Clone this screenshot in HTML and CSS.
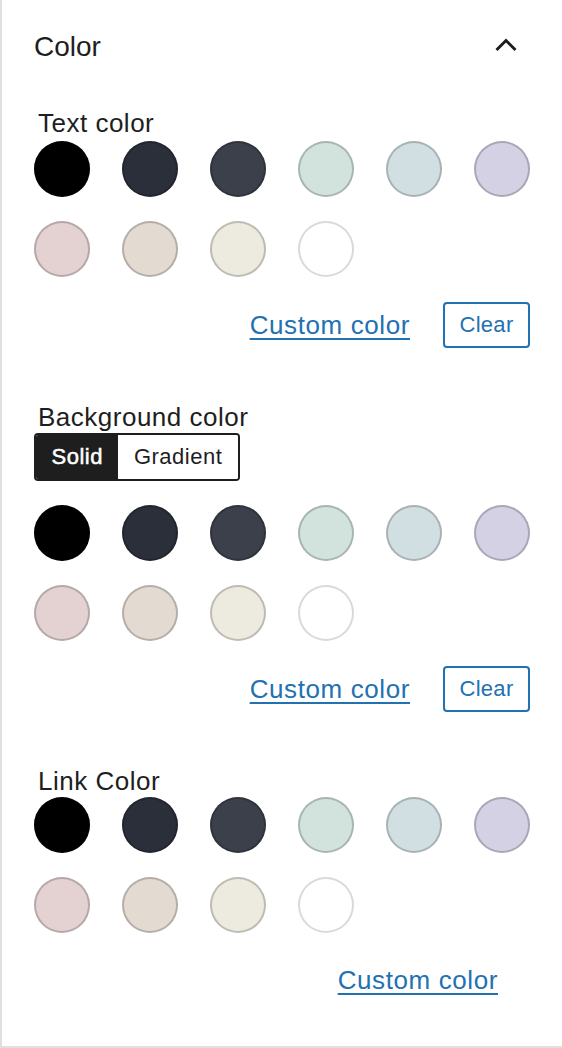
FILE: index.html
```html
<!DOCTYPE html>
<html lang="en">
<head>
<meta charset="utf-8">
<title>Color</title>
<link rel="stylesheet" href="styles.css">
</head>
<body>
<div class="panel">
  <div class="panel-head">
    <span class="panel-title">Color</span>
    <svg class="chevron" width="24" height="14" viewBox="0 0 24 14" aria-hidden="true"><path d="M2.5 12 L12 2.5 L21.5 12" fill="none" stroke="#1e1e1e" stroke-width="3"/></svg>
  </div>

  <div class="section first">
    <div class="label">Text color</div>
    <div class="swatches tight">
      <span class="sw c-black"></span><span class="sw c-dgray"></span><span class="sw c-gray"></span><span class="sw c-green"></span><span class="sw c-blue"></span><span class="sw c-purple"></span>
      <span class="sw c-red"></span><span class="sw c-orange"></span><span class="sw c-yellow"></span><span class="sw c-white"></span>
    </div>
    <div class="actions">
      <a class="custom" href="#">Custom color</a>
      <button class="clear">Clear</button>
    </div>
  </div>

  <div class="section">
    <div class="label">Background color</div>
    <div class="segmented">
      <span class="seg active">Solid</span><span class="seg">Gradient</span>
    </div>
    <div class="swatches">
      <span class="sw c-black"></span><span class="sw c-dgray"></span><span class="sw c-gray"></span><span class="sw c-green"></span><span class="sw c-blue"></span><span class="sw c-purple"></span>
      <span class="sw c-red"></span><span class="sw c-orange"></span><span class="sw c-yellow"></span><span class="sw c-white"></span>
    </div>
    <div class="actions">
      <a class="custom" href="#">Custom color</a>
      <button class="clear">Clear</button>
    </div>
  </div>

  <div class="section">
    <div class="label">Link Color</div>
    <div class="swatches tighter">
      <span class="sw c-black"></span><span class="sw c-dgray"></span><span class="sw c-gray"></span><span class="sw c-green"></span><span class="sw c-blue"></span><span class="sw c-purple"></span>
      <span class="sw c-red"></span><span class="sw c-orange"></span><span class="sw c-yellow"></span><span class="sw c-white"></span>
    </div>
    <div class="actions last">
      <a class="custom" href="#">Custom color</a>
    </div>
  </div>
</div>
</body>
</html>
```

FILE: styles.css
```css
html, body {
  margin: 0;
  padding: 0;
  background: #ffffff;
}

body {
  font-family: "Liberation Sans", Arial, sans-serif;
  color: #1e1e1e;
}

.panel {
  box-sizing: border-box;
  width: 562px;
  height: 1048px;
  border-left: 2px solid #e0e0e0;
  border-bottom: 2px solid #e0e0e0;
  padding: 31px 32px 0 32px;
  background: #ffffff;
}

.panel-head {
  display: flex;
  justify-content: space-between;
  align-items: flex-start;
  height: 32px;
}

.panel-title {
  font-size: 28px;
  line-height: 32px;
}

.chevron {
  display: block;
  margin-top: 7px;
  margin-right: 12px;
}

.section {
  margin-top: 55px;
}

.section.first {
  margin-top: 46px;
}

.label {
  font-size: 26px;
  line-height: 28px;
  letter-spacing: 0.5px;
  padding-left: 4px;
}

.swatches {
  display: grid;
  grid-template-columns: repeat(6, 56px);
  justify-content: space-between;
  row-gap: 24px;
  margin-top: 24px;
}

.swatches.tight {
  margin-top: 4px;
}

.swatches.tighter {
  margin-top: 2px;
}

.sw {
  display: block;
  width: 56px;
  height: 56px;
  border-radius: 50%;
  box-shadow: inset 0 0 0 2px rgba(0, 0, 0, 0.2);
}

.c-black { background: #000000; }
.c-dgray { background: #2a2f39; }
.c-gray { background: #3b404a; }
.c-green { background: #d2e3dd; }
.c-blue { background: #d2dfe2; }
.c-purple { background: #d3d1e3; }
.c-red { background: #e4d2d3; }
.c-orange { background: #e3dad2; }
.c-yellow { background: #edebdf; }
.c-white { background: #ffffff; box-shadow: inset 0 0 0 2px rgba(0, 0, 0, 0.15); }

.actions {
  display: flex;
  justify-content: flex-end;
  align-items: center;
  gap: 33px;
  height: 46px;
  margin-top: 25px;
}

.actions.last {
  margin-top: 24px;
  padding-right: 32px;
}

.custom {
  font-size: 26px;
  letter-spacing: 0.6px;
  color: #2271b1;
  text-decoration: underline;
  text-decoration-thickness: 2px;
  text-underline-offset: 4px;
}

.clear {
  box-sizing: border-box;
  height: 46px;
  width: 87px;
  padding: 0;
  background: #ffffff;
  border: 2px solid #2271b1;
  border-radius: 4px;
  color: #2271b1;
  font-family: "Liberation Sans", Arial, sans-serif;
  font-size: 22px;
  letter-spacing: 0.3px;
}

.segmented {
  display: inline-flex;
  box-sizing: border-box;
  height: 48px;
  margin-top: 2px;
  border: 2px solid #1e1e1e;
  border-radius: 4px;
  overflow: hidden;
}

.seg {
  display: flex;
  align-items: center;
  padding: 0 15.5px;
  font-size: 22px;
  letter-spacing: 0.5px;
  color: #1e1e1e;
  background: #ffffff;
}

.seg.active {
  background: #1e1e1e;
  color: #ffffff;
  -webkit-text-stroke: 0.5px #ffffff;
}
```
